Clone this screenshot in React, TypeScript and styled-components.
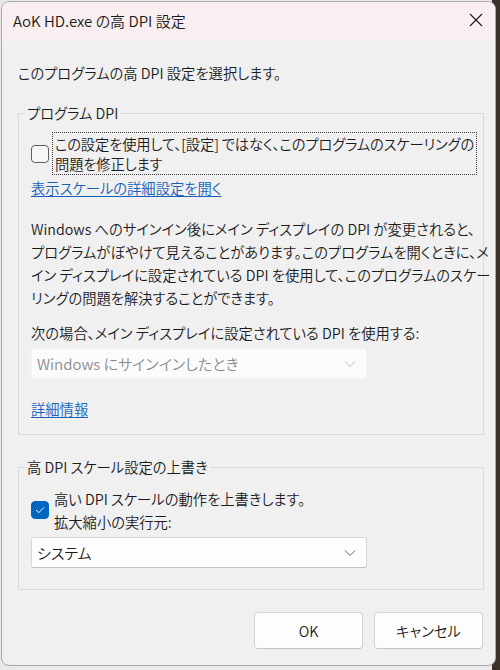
import styled, { createGlobalStyle } from 'styled-components';

const GlobalStyle = createGlobalStyle`
    html, body {
        margin: 0;
        padding: 0;
    }
    body {
        font-family: "Noto Sans CJK JP", "Noto Sans", sans-serif;
        color: #1b1b1b;
    }
`;

const ChevronDown = ({ color }: { color: string }) => (
    <svg width="12" height="8" viewBox="0 0 12 8">
        <path d="M1 1.5 L6 6.5 L11 1.5" fill="none" stroke={color} strokeWidth="1" />
    </svg>
);

const App = () => {
    return (
        <Desktop>
            <GlobalStyle />
            <Window>
                <TitleBar>
                    <Title>AoK HD.exe の高 DPI 設定</Title>
                    <CloseButton aria-label="閉じる">
                        <svg width="14" height="14" viewBox="0 0 14 14">
                            <path d="M1 1 L13 13 M13 1 L1 13" stroke="#1b1b1b" strokeWidth="1.1" />
                        </svg>
                    </CloseButton>
                </TitleBar>
                <Body>
                    <Intro>このプログラムの高 DPI 設定を選択します。</Intro>

                    <Group $top={20} $bottom={15}>
                        <Legend>プログラム DPI</Legend>
                        <CheckRow $top={9}>
                            <CheckBox $checked={false} />
                            <FocusLabel>
                                この設定を使用して、[設定] ではなく、このプログラムのスケーリングの
                                <br />
                                問題を修正します
                            </FocusLabel>
                        </CheckRow>
                        <Link $top={3}>表示スケールの詳細設定を開く</Link>
                        <Paragraph>
                            Windows へのサインイン後にメイン ディスプレイの DPI が変更されると、
                            <br />
                            プログラムがぼやけて見えることがあります。このプログラムを開くときに、メ
                            <br />
                            イン ディスプレイに設定されている DPI を使用して、このプログラムのスケー
                            <br />
                            リングの問題を解決することができます。
                        </Paragraph>
                        <FieldLabel>次の場合、メイン ディスプレイに設定されている DPI を使用する:</FieldLabel>
                        <Select $disabled>
                            <span>Windows にサインインしたとき</span>
                            <ChevronDown color="#b8b8b8" />
                        </Select>
                        <Link $top={20}>詳細情報</Link>
                    </Group>

                    <Group $top={22} $bottom={21}>
                        <Legend>高 DPI スケール設定の上書き</Legend>
                        <CheckRow $top={10}>
                            <CheckBox $checked>
                                <svg width="10" height="8" viewBox="0 0 10 8">
                                    <path d="M1 4 L3.8 6.6 L9 1.4" fill="none" stroke="#fff" strokeWidth="1" />
                                </svg>
                            </CheckBox>
                            <PlainLabel>
                                高い DPI スケールの動作を上書きします。
                                <br />
                                拡大縮小の実行元:
                            </PlainLabel>
                        </CheckRow>
                        <Select $disabled={false}>
                            <span>システム</span>
                            <ChevronDown color="#606060" />
                        </Select>
                    </Group>

                    <ButtonRow>
                        <Button>OK</Button>
                        <Button>キャンセル</Button>
                    </ButtonRow>
                </Body>
            </Window>
        </Desktop>
    );
};

export default App;

const Desktop = styled.div`
    width: 500px;
    height: 670px;
    box-sizing: border-box;
    padding: 1px 0 0 1px;
    background: linear-gradient(to right, #e9e9ea 0 492px, #3a3129 492px);
    overflow: hidden;
`;

const Window = styled.div`
    width: 495px;
    height: 665px;
    box-sizing: border-box;
    border: 1px solid #a9a9a9;
    border-radius: 8px;
    background: #f0f0f0;
    overflow: hidden;
    display: flex;
    flex-direction: column;
    font-size: 14.3px;
    font-weight: 350;
    font-feature-settings: "palt";
`;

const TitleBar = styled.div`
    height: 39px;
    flex: none;
    display: flex;
    align-items: center;
    justify-content: space-between;
    padding: 0 12px 0 11px;
    background: #f9eff0;
`;

const Title = styled.div`
    font-size: 15px;
    line-height: 20px;
    padding-bottom: 2px;
`;

const CloseButton = styled.button`
    border: 0;
    background: transparent;
    padding: 0;
    width: 14px;
    height: 14px;
    display: flex;
    margin-bottom: 3px;
`;

const Body = styled.div`
    flex: 1;
    display: flex;
    flex-direction: column;
    padding: 0 11px 0 16px;
`;

const Intro = styled.div`
    margin-top: 22px;
    line-height: 20px;
`;

const Group = styled.fieldset<{ $top: number; $bottom: number }>`
    margin: ${(p) => p.$top}px 0 0 0;
    padding: 0 12px ${(p) => p.$bottom}px 12px;
    border: 1px solid #dadada;
    display: flex;
    flex-direction: column;
    align-items: flex-start;
    min-width: 0;
`;

const Legend = styled.legend`
    padding: 0 2px;
    margin-left: -6px;
    line-height: 20px;
    font-size: 14.3px;
`;

const CheckRow = styled.div<{ $top: number }>`
    display: flex;
    align-items: center;
    margin-top: ${(p) => p.$top}px;
    width: 100%;
`;

const CheckBox = styled.span<{ $checked: boolean }>`
    flex: none;
    width: 18px;
    height: 18px;
    box-sizing: border-box;
    border-radius: 4px;
    display: flex;
    align-items: center;
    justify-content: center;
    margin-right: 3px;
    border: 1px solid ${(p) => (p.$checked ? '#0067c0' : '#5e5e5e')};
    background: ${(p) => (p.$checked ? '#0067c0' : '#f7f7f7')};
`;

const FocusLabel = styled.span`
    border: 1px dotted #3c3c3c;
    padding: 1px 2px 0 2px;
    line-height: 20px;
    white-space: nowrap;
    letter-spacing: -0.15px;
`;

const PlainLabel = styled.span`
    line-height: 23px;
    padding-left: 2px;
    white-space: nowrap;
`;

const Link = styled.a<{ $top: number }>`
    margin-top: ${(p) => p.$top}px;
    color: #1762b8;
    text-decoration: underline;
    text-underline-offset: 2px;
    line-height: 20px;
    cursor: pointer;
`;

const Paragraph = styled.p`
    margin: 19px 0 0 0;
    line-height: 23px;
    white-space: nowrap;
`;

const FieldLabel = styled.div`
    margin-top: 13px;
    line-height: 22px;
`;

const Select = styled.div<{ $disabled: boolean }>`
    margin-top: 4px;
    width: 336px;
    height: 31px;
    box-sizing: border-box;
    display: flex;
    align-items: center;
    justify-content: space-between;
    padding: 0 10px 0 5px;
    border-radius: 3px;
    font-size: 15px;
    border: 1px solid ${(p) => (p.$disabled ? '#f4f4f4' : '#d6d6d6')};
    border-bottom-color: ${(p) => (p.$disabled ? '#f4f4f4' : '#c2c2c2')};
    background: ${(p) => (p.$disabled ? '#fbfbfb' : '#fefefe')};
    color: ${(p) => (p.$disabled ? '#8c8c8c' : '#1b1b1b')};
`;

const ButtonRow = styled.div`
    display: flex;
    justify-content: flex-end;
    gap: 11px;
    margin-top: 22px;
    padding-right: 1px;
`;

const Button = styled.button`
    width: 109px;
    height: 37px;
    border: 1px solid #d3d3d3;
    border-bottom-color: #c4c4c4;
    border-radius: 4px;
    background: #fdfdfd;
    font-family: inherit;
    font-size: 14.3px;
    font-weight: 350;
    color: #1b1b1b;
    font-feature-settings: "palt";
`;
